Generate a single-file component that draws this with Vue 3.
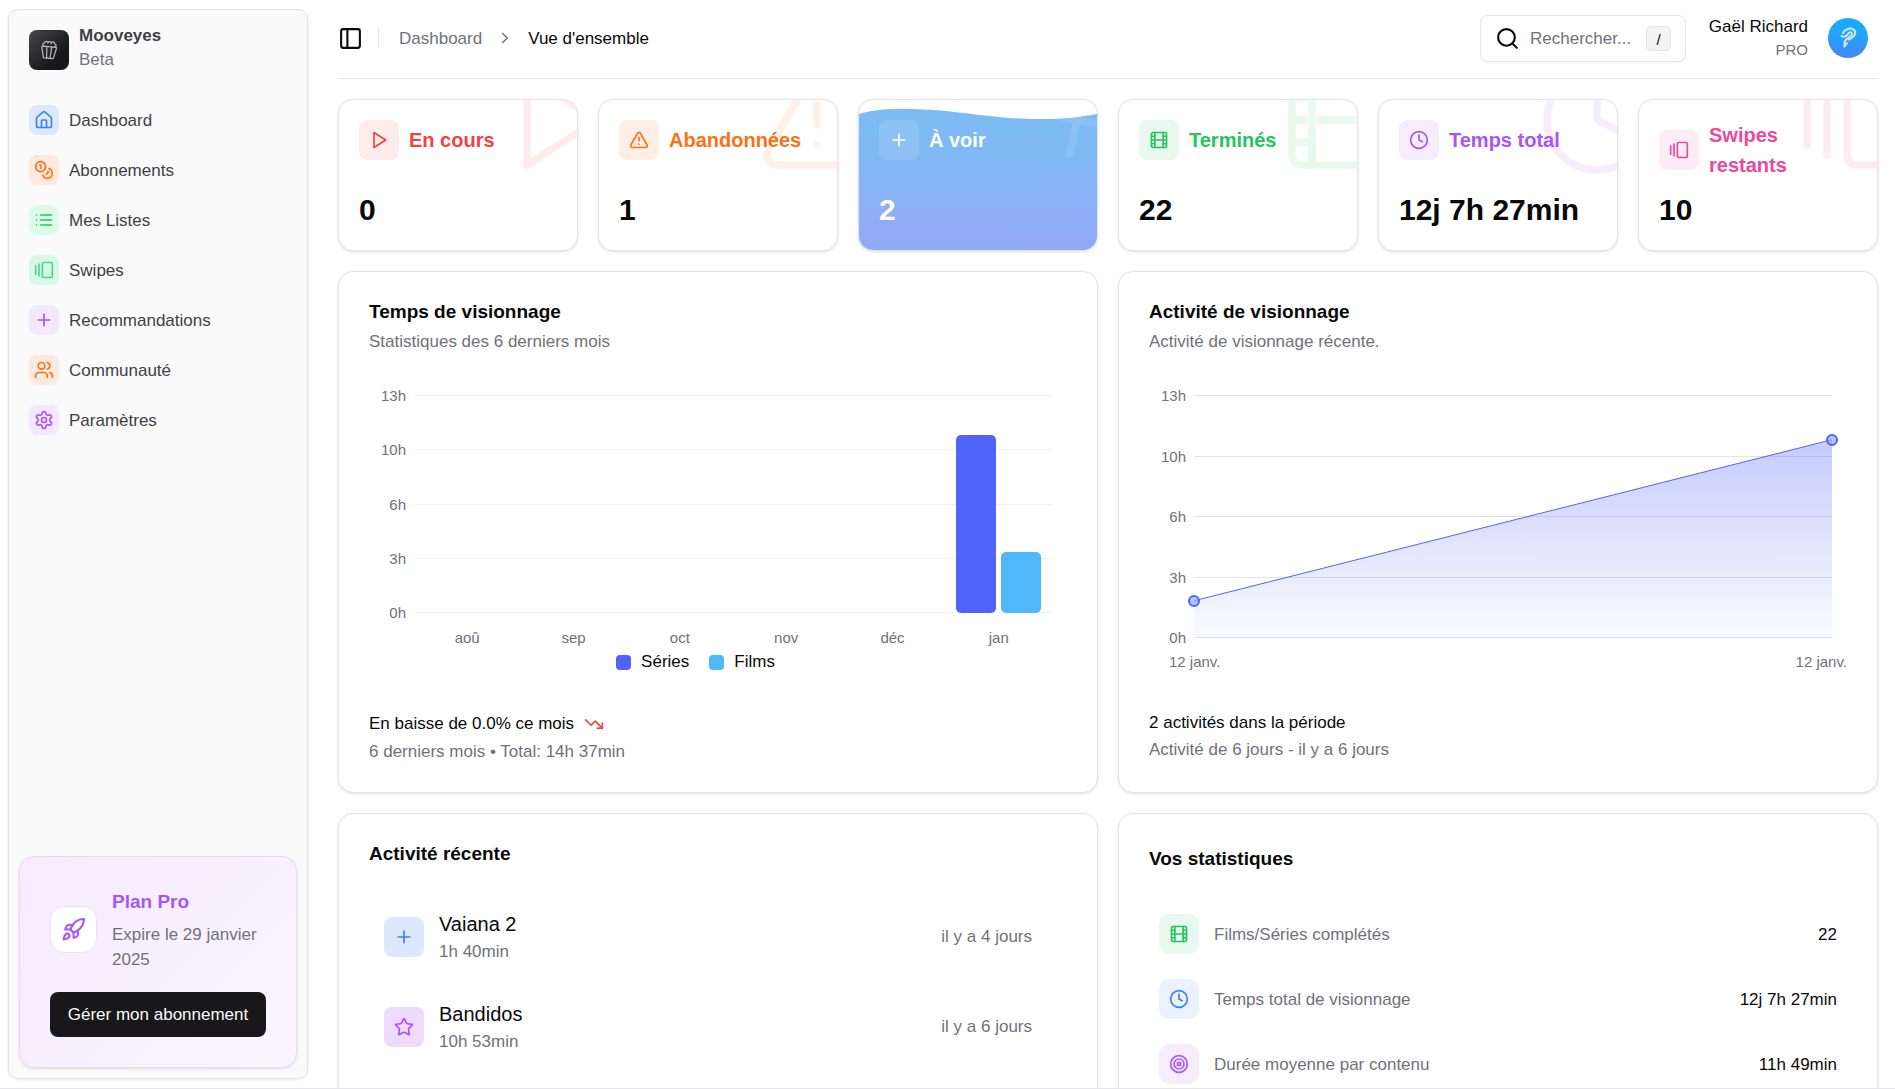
<script setup>
const icons = {
  popcorn: '<path d="M18 8a2 2 0 0 0 0-4 2 2 0 0 0-4 0 2 2 0 0 0-4 0 2 2 0 0 0-4 0 2 2 0 0 0 0 4"/><path d="M10 22 9 8"/><path d="m14 22 1-14"/><path d="M20 8c.5 0 .9.4.8 1l-2.6 12c-.1.5-.7 1-1.2 1H7c-.6 0-1.1-.4-1.2-1L3.2 9c-.1-.6.3-1 .8-1Z"/>',
  home: '<path d="M15 21v-8a1 1 0 0 0-1-1h-4a1 1 0 0 0-1 1v8"/><path d="M3 10a2 2 0 0 1 .709-1.528l7-5.999a2 2 0 0 1 2.582 0l7 5.999A2 2 0 0 1 21 10v9a2 2 0 0 1-2 2H5a2 2 0 0 1-2-2z"/>',
  coins: '<circle cx="8" cy="8" r="6"/><path d="M18.09 10.37A6 6 0 1 1 10.34 18"/><path d="M7 6h1v4"/><path d="m16.71 13.88.7.71-2.82 2.82"/>',
  list: '<path d="M3 12h.01"/><path d="M3 18h.01"/><path d="M3 6h.01"/><path d="M8 12h13"/><path d="M8 18h13"/><path d="M8 6h13"/>',
  swipes: '<path d="M2 7v10"/><path d="M6 5v14"/><rect width="12" height="18" x="10" y="3" rx="2"/>',
  plus: '<path d="M5 12h14"/><path d="M12 5v14"/>',
  users: '<path d="M16 21v-2a4 4 0 0 0-4-4H6a4 4 0 0 0-4 4v2"/><circle cx="9" cy="7" r="4"/><path d="M22 21v-2a4 4 0 0 0-3-3.87"/><path d="M16 3.13a4 4 0 0 1 0 7.75"/>',
  settings: '<path d="M12.22 2h-.44a2 2 0 0 0-2 2v.18a2 2 0 0 1-1 1.73l-.43.25a2 2 0 0 1-2 0l-.15-.08a2 2 0 0 0-2.73.73l-.22.38a2 2 0 0 0 .73 2.73l.15.1a2 2 0 0 1 1 1.72v.51a2 2 0 0 1-1 1.74l-.15.09a2 2 0 0 0-.73 2.73l.22.38a2 2 0 0 0 2.73.73l.15-.08a2 2 0 0 1 2 0l.43.25a2 2 0 0 1 1 1.73V20a2 2 0 0 0 2 2h.44a2 2 0 0 0 2-2v-.18a2 2 0 0 1 1-1.73l.43-.25a2 2 0 0 1 2 0l.15.08a2 2 0 0 0 2.73-.73l.22-.39a2 2 0 0 0-.73-2.73l-.15-.08a2 2 0 0 1-1-1.74v-.5a2 2 0 0 1 1-1.74l.15-.09a2 2 0 0 0 .73-2.73l-.22-.38a2 2 0 0 0-2.73-.73l-.15.08a2 2 0 0 1-2 0l-.43-.25a2 2 0 0 1-1-1.73V4a2 2 0 0 0-2-2z"/><circle cx="12" cy="12" r="3"/>',
  rocket: '<path d="M4.5 16.5c-1.5 1.26-2 5-2 5s3.74-.5 5-2c.71-.84.7-2.13-.09-2.91a2.18 2.18 0 0 0-2.91-.09z"/><path d="m12 15-3-3a22 22 0 0 1 2-3.95A12.88 12.88 0 0 1 22 2c0 2.72-.78 7.5-6 11a22.35 22.35 0 0 1-4 2z"/><path d="M9 12H4s.55-3.03 2-4c1.62-1.08 5 0 5 0"/><path d="M12 15v5s3.03-.55 4-2c1.08-1.62 0-5 0-5"/>',
  panel: '<rect width="18" height="18" x="3" y="3" rx="2"/><path d="M9 3v18"/>',
  chevron: '<path d="m9 18 6-6-6-6"/>',
  search: '<circle cx="11" cy="11" r="8"/><path d="m21 21-4.3-4.3"/>',
  play: '<polygon points="6 3 20 12 6 21 6 3"/>',
  alert: '<path d="m21.73 18-8-14a2 2 0 0 0-3.48 0l-8 14A2 2 0 0 0 4 21h16a2 2 0 0 0 1.73-3"/><path d="M12 9v4"/><path d="M12 17h.01"/>',
  film: '<rect width="18" height="18" x="3" y="3" rx="2"/><path d="M7 3v18"/><path d="M3 7.5h4"/><path d="M3 12h18"/><path d="M3 16.5h4"/><path d="M17 3v18"/><path d="M17 7.5h4"/><path d="M17 16.5h4"/>',
  clock: '<circle cx="12" cy="12" r="10"/><path d="M12 6v6l4 2"/>',
  trendDown: '<path d="M22 17 13.5 8.5l-5 5L2 7"/><path d="M16 17h6v-6"/>',
  star: '<path d="M11.525 2.295a.53.53 0 0 1 .95 0l2.31 4.679a2.123 2.123 0 0 0 1.595 1.16l5.166.756a.53.53 0 0 1 .294.904l-3.736 3.638a2.123 2.123 0 0 0-.611 1.878l.882 5.14a.53.53 0 0 1-.771.56l-4.618-2.428a2.122 2.122 0 0 0-1.973 0L6.396 21.01a.53.53 0 0 1-.77-.56l.881-5.139a2.122 2.122 0 0 0-.611-1.879L2.16 9.795a.53.53 0 0 1 .294-.906l5.165-.755a2.122 2.122 0 0 0 1.597-1.16z"/>',
  target: '<circle cx="12" cy="12" r="10"/><circle cx="12" cy="12" r="6"/><circle cx="12" cy="12" r="2"/>',
}

const nav = [
  { label: 'Dashboard', icon: 'home', tone: 'blue' },
  { label: 'Abonnements', icon: 'coins', tone: 'orange' },
  { label: 'Mes Listes', icon: 'list', tone: 'green' },
  { label: 'Swipes', icon: 'swipes', tone: 'mint' },
  { label: 'Recommandations', icon: 'plus', tone: 'purple' },
  { label: 'Communauté', icon: 'users', tone: 'orange' },
  { label: 'Paramètres', icon: 'settings', tone: 'purple' },
]

const stats = [
  { label: 'En cours', value: '0', icon: 'play', tone: 'red' },
  { label: 'Abandonnées', value: '1', icon: 'alert', tone: 'orange' },
  { label: 'À voir', value: '2', icon: 'plus', tone: 'active' },
  { label: 'Terminés', value: '22', icon: 'film', tone: 'green' },
  { label: 'Temps total', value: '12j 7h 27min', icon: 'clock', tone: 'purple' },
  { label: 'Swipes restants', value: '10', icon: 'swipes', tone: 'pink' },
]

const hours = ['13h', '10h', '6h', '3h', '0h']

// Share of the vertical axis, in percent
const months = [
  { label: 'aoû', series: 0, films: 0 },
  { label: 'sep', series: 0, films: 0 },
  { label: 'oct', series: 0, films: 0 },
  { label: 'nov', series: 0, films: 0 },
  { label: 'déc', series: 0, films: 0 },
  { label: 'jan', series: 81.6, films: 28 },
]

const points = [
  { x: 0, y: 84.7 },
  { x: 100, y: 18.4 },
]

const recent = [
  { title: 'Vaiana 2', duration: '1h 40min', when: 'il y a 4 jours', icon: 'plus', tone: 'blue' },
  { title: 'Bandidos', duration: '10h 53min', when: 'il y a 6 jours', icon: 'star', tone: 'violet' },
]

const totals = [
  { label: 'Films/Séries complétés', value: '22', icon: 'film', tone: 'green' },
  { label: 'Temps total de visionnage', value: '12j 7h 27min', icon: 'clock', tone: 'blue' },
  { label: 'Durée moyenne par contenu', value: '11h 49min', icon: 'target', tone: 'purple' },
]
</script>

<template>
  <div class="app">
    <aside class="sidebar">
      <a class="brand" href="#">
        <span class="brand-logo"><svg class="icon" viewBox="0 0 24 24" v-html="icons.popcorn"></svg></span>
        <span class="brand-text">
          <strong>Mooveyes</strong>
          <span>Beta</span>
        </span>
      </a>
      <nav class="nav">
        <a v-for="item in nav" :key="item.label" class="nav-item" href="#">
          <span class="nav-icon" :class="'nav-' + item.tone">
            <svg class="icon" viewBox="0 0 24 24" v-html="icons[item.icon]"></svg>
          </span>
          <span>{{ item.label }}</span>
        </a>
      </nav>
      <section class="plan">
        <div class="plan-info">
          <span class="plan-icon"><svg class="icon" viewBox="0 0 24 24" v-html="icons.rocket"></svg></span>
          <div>
            <h2>Plan Pro</h2>
            <p>Expire le 29 janvier 2025</p>
          </div>
        </div>
        <button type="button" class="plan-button">Gérer mon abonnement</button>
      </section>
    </aside>

    <main class="main">
      <header class="topbar">
        <button type="button" class="toggle" aria-label="Afficher ou masquer le menu">
          <svg class="icon" viewBox="0 0 24 24" v-html="icons.panel"></svg>
        </button>
        <span class="divider"></span>
        <nav class="crumbs">
          <a href="#">Dashboard</a>
          <svg class="icon" viewBox="0 0 24 24" v-html="icons.chevron"></svg>
          <span>Vue d'ensemble</span>
        </nav>
        <label class="search">
          <svg class="icon" viewBox="0 0 24 24" v-html="icons.search"></svg>
          <input type="text" placeholder="Rechercher..." aria-label="Rechercher" />
          <kbd>/</kbd>
        </label>
        <div class="user">
          <span class="user-name">Gaël Richard</span>
          <span class="user-plan">PRO</span>
        </div>
        <button type="button" class="avatar" aria-label="Mon compte">
          <svg viewBox="0 0 40 40">
            <path d="M15 15C17 11 22 9.500 25.500 11.500C29 14 27 19.500 20.500 21.500" />
            <path d="M13.500 18C16.500 19.500 18.500 18.500 20 16C21.500 13.500 24.500 14 24 16.500C23 19 17.500 20 16.500 24V28.500L19 25" />
          </svg>
        </button>
      </header>

      <section class="stats">
        <article v-for="s in stats" :key="s.label" class="card stat" :class="'tone-' + s.tone">
          <svg v-if="s.tone === 'active'" class="wave" viewBox="0 0 240 150" preserveAspectRatio="none">
            <defs>
              <linearGradient id="waveFill" x1="0" y1="0" x2="0" y2="1">
                <stop offset="0" stop-color="#7cbcf3" />
                <stop offset="0.35" stop-color="#80b8f4" />
                <stop offset="0.8" stop-color="#90acf6" />
                <stop offset="1" stop-color="#91a9f7" />
              </linearGradient>
            </defs>
            <path d="M0 14C22 7 52 8 88 11C125 15 148 19 182 19C206 19 224 17 240 14V150H0Z" fill="url(#waveFill)" />
          </svg>
          <svg class="icon stat-ghost" viewBox="0 0 24 24" v-html="icons[s.icon]"></svg>
          <div class="stat-head">
            <span class="tile"><svg class="icon" viewBox="0 0 24 24" v-html="icons[s.icon]"></svg></span>
            <h3>{{ s.label }}</h3>
          </div>
          <p class="stat-value">{{ s.value }}</p>
        </article>
      </section>

      <section class="panels">
        <article class="card panel">
          <h2>Temps de visionnage</h2>
          <p class="sub">Statistiques des 6 derniers mois</p>
          <div class="chart chart-bars">
            <ul class="y-axis"><li v-for="h in hours" :key="h">{{ h }}</li></ul>
            <div class="plot">
              <div class="lines"><i v-for="h in hours" :key="h"></i></div>
              <div class="bands">
                <div v-for="m in months" :key="m.label" class="band">
                  <span class="bar bar-series" :style="{ height: m.series + '%' }"></span>
                  <span class="bar bar-films" :style="{ height: m.films + '%' }"></span>
                </div>
              </div>
            </div>
          </div>
          <ul class="months"><li v-for="m in months" :key="m.label">{{ m.label }}</li></ul>
          <ul class="legend">
            <li><i class="bar-series"></i>Séries</li>
            <li><i class="bar-films"></i>Films</li>
          </ul>
          <footer class="foot foot-tight">
            <p>En baisse de 0.0% ce mois <svg class="icon trend" viewBox="0 0 24 24" v-html="icons.trendDown"></svg></p>
            <p class="muted">6 derniers mois • Total: 14h 37min</p>
          </footer>
        </article>

        <article class="card panel">
          <h2>Activité de visionnage</h2>
          <p class="sub">Activité de visionnage récente.</p>
          <div class="chart chart-area">
            <ul class="y-axis"><li v-for="h in hours" :key="h">{{ h }}</li></ul>
            <div class="plot">
              <div class="lines"><i v-for="h in hours" :key="h"></i></div>
              <svg class="area" viewBox="0 0 100 100" preserveAspectRatio="none">
                <defs>
                  <linearGradient id="areaFill" x1="0" y1="0" x2="0" y2="1">
                    <stop offset="0.05" stop-color="#4f65f9" stop-opacity="0.32" />
                    <stop offset="0.95" stop-color="#4f65f9" stop-opacity="0.04" />
                  </linearGradient>
                </defs>
                <path d="M0 84.7L100 18.4V100H0Z" fill="url(#areaFill)" />
                <path class="area-line" d="M0 84.7L100 18.4" />
              </svg>
              <span v-for="p in points" :key="p.x" class="dot" :style="{ left: p.x + '%', top: p.y + '%' }"></span>
            </div>
          </div>
          <div class="dates"><span>12 janv.</span><span>12 janv.</span></div>
          <footer class="foot">
            <p>2 activités dans la période</p>
            <p class="muted">Activité de 6 jours - il y a 6 jours</p>
          </footer>
        </article>

        <article class="card panel">
          <h2>Activité récente</h2>
          <ul class="recent">
            <li v-for="r in recent" :key="r.title">
              <span class="tile" :class="'tile-' + r.tone"><svg class="icon" viewBox="0 0 24 24" v-html="icons[r.icon]"></svg></span>
              <div class="recent-text">
                <h3>{{ r.title }}</h3>
                <p>{{ r.duration }}</p>
              </div>
              <time>{{ r.when }}</time>
            </li>
          </ul>
        </article>

        <article class="card panel">
          <h2 class="tall">Vos statistiques</h2>
          <dl class="totals">
            <div v-for="t in totals" :key="t.label" class="total" :class="'tone-' + t.tone">
              <span class="tile tile-round"><svg class="icon" viewBox="0 0 24 24" v-html="icons[t.icon]"></svg></span>
              <dt>{{ t.label }}</dt>
              <dd>{{ t.value }}</dd>
            </div>
          </dl>
        </article>
      </section>
    </main>
  </div>
</template>

<style>
body {
  background: #fff;
}
</style>

<style scoped>
.app,
.app * {
  box-sizing: border-box;
}
.app {
  display: flex;
  height: 100vh;
  overflow: hidden;
  border-bottom: 1px solid #e4e4e7;
  color: #09090b;
  font-family: "Liberation Sans", Arial, sans-serif;
  font-size: 17px;
  line-height: 25px;
}
h2,
h3,
p,
ul,
dl,
dd {
  margin: 0;
  padding: 0;
}
ul {
  list-style: none;
}
a {
  color: inherit;
  text-decoration: none;
}
button,
input {
  font: inherit;
}
.icon {
  display: block;
  flex: none;
  width: 20px;
  height: 20px;
  fill: none;
  stroke: currentColor;
  stroke-width: 2;
  stroke-linecap: round;
  stroke-linejoin: round;
}

/* Sidebar */
.sidebar {
  display: flex;
  flex: none;
  flex-direction: column;
  width: 300px;
  margin: 9px 0 9px 8px;
  padding: 10px;
  border: 1px solid #e4e4e7;
  border-radius: 10px;
  background: #fafafa;
  box-shadow: 0 1px 3px rgba(0, 0, 0, 0.08);
  color: #3f3f46;
}
.brand {
  display: flex;
  align-items: center;
  gap: 10px;
  height: 60px;
  padding: 0 10px;
}
.brand-logo {
  display: grid;
  place-items: center;
  width: 40px;
  height: 40px;
  border-radius: 8px;
  background: linear-gradient(135deg, #46464a, #18181b 70%);
  color: #b4b4b8;
}
.brand-logo .icon {
  stroke-width: 1.5;
  transform: rotate(5deg);
}
.brand-text {
  display: grid;
  padding-bottom: 4px;
  line-height: 24px;
}
.brand-text span {
  color: #71717a;
}
.nav {
  display: grid;
  gap: 10px;
  margin-top: 20px;
}
.nav-item {
  display: flex;
  align-items: center;
  gap: 10px;
  height: 40px;
  padding: 0 10px;
}
.nav-icon {
  display: grid;
  place-items: center;
  width: 30px;
  height: 30px;
  border-radius: 8px;
}
.nav-blue {
  background: #dbe8fe;
  color: #3b82f6;
}
.nav-orange {
  background: #ffe9df;
  color: #f97316;
}
.nav-green {
  background: #dcfce7;
  color: #22c55e;
}
.nav-mint {
  background: #d6fae5;
  color: #57d38c;
}
.nav-purple {
  background: #f3e8ff;
  color: #a855f7;
}
.plan {
  margin-top: auto;
  padding: 30px;
  border: 1px solid #e9d5ff;
  border-radius: 15px;
  background: linear-gradient(135deg, #f5ebff, #faf5ff);
  box-shadow: 0 1px 3px rgba(0, 0, 0, 0.12);
}
.plan-info {
  display: flex;
  align-items: center;
  gap: 15px;
}
.plan-icon {
  display: grid;
  flex: none;
  place-items: center;
  width: 47px;
  height: 47px;
  border: 1px solid #f0e0ff;
  border-radius: 14px;
  background: #fff;
  color: #a855f7;
}
.plan-icon .icon {
  width: 25px;
  height: 25px;
}
.plan h2 {
  margin-bottom: 5px;
  color: #a855f7;
  font-size: 19px;
  line-height: 30px;
}
.plan p {
  color: #71717a;
}
.plan-button {
  width: 100%;
  height: 45px;
  margin-top: 20px;
  padding: 0;
  border: 0;
  border-radius: 8px;
  background: #18181b;
  color: #fafafa;
}

/* Top bar */
.main {
  flex: 1;
  min-width: 0;
  padding: 0 17px 20px 30px;
  overflow-y: auto;
  scrollbar-width: none;
}
.topbar {
  display: flex;
  align-items: center;
  height: 79px;
  padding: 0 10px 2px 0;
  border-bottom: 1px solid #e4e4e7;
}
.toggle {
  padding: 0;
  border: 0;
  background: none;
  color: inherit;
}
.toggle .icon,
.search .icon {
  width: 25px;
  height: 25px;
}
.divider {
  width: 1px;
  height: 20px;
  margin: 0 20px 0 15px;
  background: #e4e4e7;
}
.crumbs {
  display: flex;
  align-items: center;
  gap: 14px;
}
.crumbs a,
.crumbs .icon {
  color: #71717a;
}
.crumbs .icon {
  width: 18px;
  height: 18px;
}
.search {
  display: flex;
  align-items: center;
  gap: 10px;
  height: 47px;
  margin-left: auto;
  padding: 0 14px;
  border: 1px solid #e4e4e7;
  border-radius: 8px;
  box-shadow: 0 1px 2px rgba(0, 0, 0, 0.05);
}
.search input {
  width: 106px;
  padding: 0;
  border: 0;
  outline: 0;
  background: none;
}
.search input::placeholder {
  color: #71717a;
}
.search kbd {
  width: 25px;
  height: 25px;
  border: 1px solid #e4e4e7;
  border-radius: 5px;
  background: #f4f4f5;
  font-family: inherit;
  font-size: 15px;
  line-height: 25px;
  text-align: center;
}
.user {
  display: grid;
  min-width: 102px;
  margin: 0 20px;
  line-height: 23px;
  text-align: right;
}
.user-plan {
  color: #71717a;
  font-size: 15px;
}
.avatar {
  width: 40px;
  height: 40px;
  padding: 0;
  border: 0;
  border-radius: 50%;
  background: linear-gradient(#1ca8fa 35%, #4a86f5);
}
.avatar svg {
  display: block;
  fill: none;
  stroke: #d3e5fb;
  stroke-width: 2;
  stroke-linecap: round;
  stroke-linejoin: round;
}

/* Cards */
.card {
  border: 1px solid #e4e4e7;
  border-radius: 15px;
  background: #fff;
  box-shadow: 0 1px 3px rgba(0, 0, 0, 0.12);
}
.tile {
  display: grid;
  flex: none;
  place-items: center;
  width: 40px;
  height: 40px;
  border-radius: 8px;
}
.tile-round {
  border-radius: 10px;
}
.stats {
  display: grid;
  grid-template-columns: repeat(6, minmax(0, 1fr));
  gap: 20px;
  margin-top: 20px;
}
.stat {
  position: relative;
  display: flex;
  flex-direction: column;
  gap: 10px;
  padding: 20px;
  overflow: hidden;
}
.stat-ghost {
  position: absolute;
  top: -40px;
  right: -40px;
  width: 120px;
  height: 120px;
  opacity: 0.1;
  stroke-width: 1.5;
}
.stat-head {
  position: relative;
  display: flex;
  align-items: center;
  gap: 10px;
}
.stat-head h3 {
  font-size: 20px;
  line-height: 30px;
}
.stat-value {
  position: relative;
  margin-top: auto;
  color: #09090b;
  font-size: 30px;
  font-weight: 700;
  line-height: 40px;
}
.tone-red {
  color: #ef4444;
}
.tone-red .tile {
  background: #feeceb;
}
.tone-orange {
  color: #f97316;
}
.tone-orange .tile {
  background: #feeee3;
}
.tone-green {
  color: #22c55e;
}
.tone-green .tile {
  background: #e9f9ef;
}
.tone-purple {
  color: #a855f7;
}
.tone-purple .tile {
  background: #f5edfe;
}
.tone-pink {
  color: #ec4899;
}
.tone-pink .tile {
  background: #fdecf5;
}
.tone-blue {
  color: #3b82f6;
}
.tone-blue .tile {
  background: #ebf1fe;
}
.tone-active,
.tone-active .stat-value {
  color: #fff;
}
.tone-active .tile {
  background: rgba(255, 255, 255, 0.12);
}
.tone-active .stat-ghost {
  transform: rotate(12deg);
}
.wave {
  position: absolute;
  inset: 0;
  width: 100%;
  height: 100%;
}

/* Panels */
.panels {
  display: grid;
  grid-template-columns: repeat(2, minmax(0, 1fr));
  gap: 20px;
  margin-top: 20px;
}
.panel {
  display: flex;
  flex-direction: column;
  padding: 30px;
}
.panel h2 {
  font-size: 19px;
  line-height: 20px;
}
.panel h2.tall {
  line-height: 30px;
}
.sub {
  margin-top: 7px;
  color: #71717a;
}
.muted {
  color: #71717a;
}
.chart {
  display: flex;
  gap: 8px;
  margin-top: 41px;
  padding-right: 15px;
}
.chart-bars {
  height: 218px;
}
.chart-area {
  height: 243px;
}
.y-axis {
  display: flex;
  flex-direction: column;
  justify-content: space-between;
  width: 37px;
  color: #71717a;
  font-size: 15px;
}
.y-axis li {
  display: flex;
  align-items: center;
  justify-content: flex-end;
  height: 1px;
}
.plot {
  position: relative;
  display: grid;
  flex: 1;
}
.lines,
.bands,
.area {
  grid-area: 1 / 1;
}
.lines {
  display: flex;
  flex-direction: column;
  justify-content: space-between;
}
.lines i {
  height: 1px;
  background: #f2f2f3;
}
.chart-area .lines i {
  background: #e4e4e7;
}
.bands {
  display: flex;
  z-index: 1;
}
.band {
  display: flex;
  flex: 1;
  align-items: flex-end;
  justify-content: center;
  gap: 5px;
}
.bar {
  width: 40px;
  border-radius: 5px;
}
.bar-series {
  background: #4f65f9;
}
.bar-films {
  background: #50b8f9;
}
.months {
  display: flex;
  margin: 15px 15px 0 45px;
  color: #71717a;
  font-size: 15px;
  line-height: 20px;
}
.months li {
  flex: 1;
  text-align: center;
}
.legend {
  display: flex;
  justify-content: center;
  gap: 20px;
  margin-top: 4px;
  padding-right: 45px;
  line-height: 20px;
}
.legend li {
  display: flex;
  align-items: center;
  gap: 10px;
}
.legend i {
  width: 15px;
  height: 15px;
  border-radius: 4px;
}
.area {
  z-index: 1;
  width: 100%;
  height: 100%;
}
.area-line {
  fill: none;
  stroke: #4f65f9;
  stroke-width: 1;
  vector-effect: non-scaling-stroke;
}
.dot {
  position: absolute;
  z-index: 2;
  width: 12px;
  height: 12px;
  border: 2px solid #4f65f9;
  border-radius: 50%;
  background: rgba(150, 172, 247, 0.7);
  transform: translate(-50%, -50%);
}
.dates {
  display: flex;
  justify-content: space-between;
  margin: 14px 0 0 20px;
  color: #71717a;
  font-size: 15px;
  line-height: 20px;
}
.foot {
  display: grid;
  gap: 2px;
  margin-top: auto;
}
.foot-tight {
  gap: 8px;
  padding-top: 42px;
  line-height: 20px;
}
.foot p {
  display: flex;
  align-items: center;
  gap: 10px;
}
.trend {
  color: #ef4444;
}
.recent {
  display: grid;
  gap: 5px;
  margin: 30px 20px 0 0;
}
.recent li {
  display: flex;
  align-items: center;
  gap: 15px;
  padding: 15px;
}
.recent-text {
  flex: 1;
}
.recent h3 {
  font-size: 20px;
  font-weight: 400;
  line-height: 30px;
}
.recent p,
.recent time,
.total dt {
  color: #71717a;
}
.tile-blue {
  background: #dbe8fe;
  color: #3b82f6;
}
.tile-violet {
  background: #eddafd;
  color: #a855f7;
}
.totals {
  display: grid;
  gap: 5px;
  margin-top: 30px;
}
.total {
  display: flex;
  align-items: center;
  gap: 15px;
  padding: 10px;
}
.total dd {
  margin-left: auto;
  color: #09090b;
}
</style>
